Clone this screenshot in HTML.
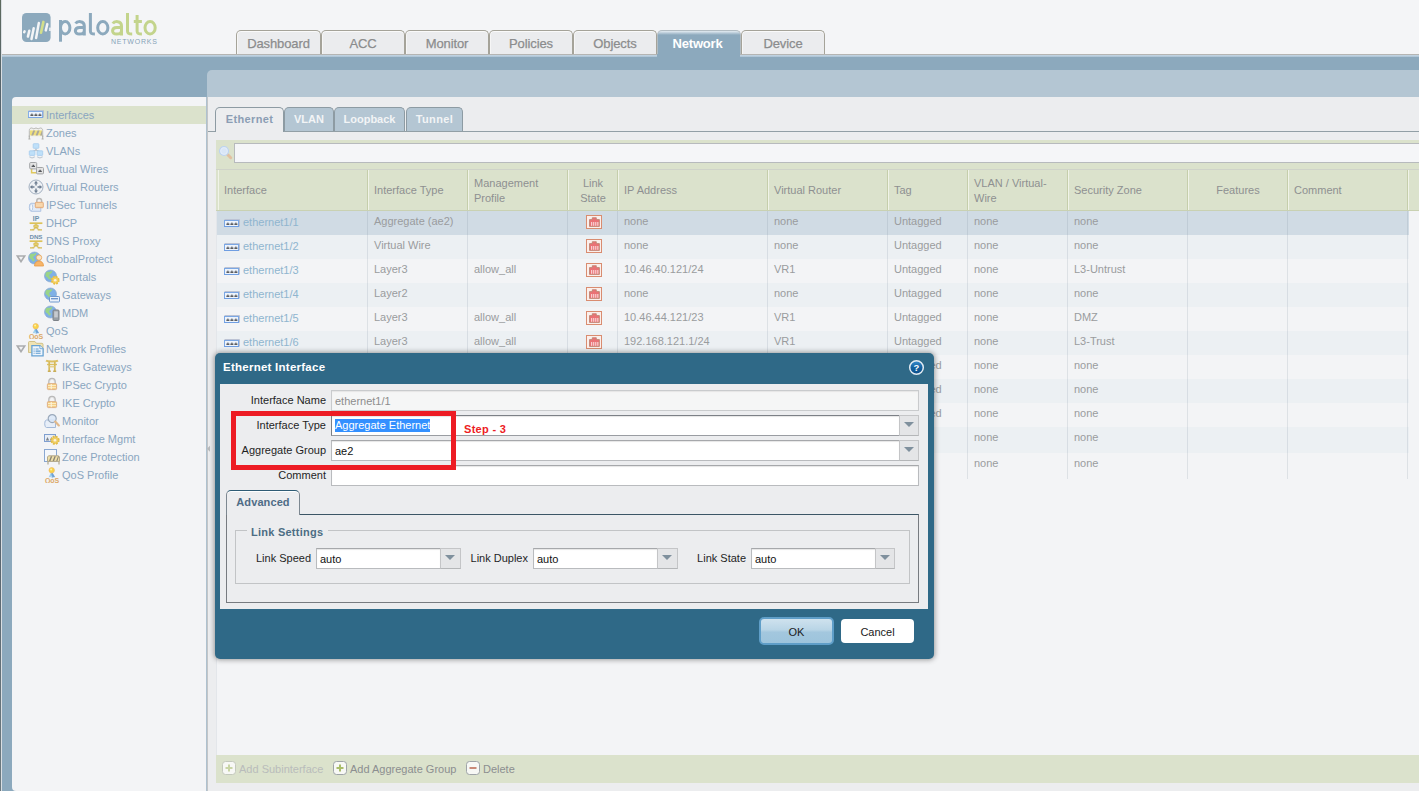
<!DOCTYPE html>
<html>
<head>
<meta charset="utf-8">
<title>Ethernet Interface</title>
<style>
*{box-sizing:border-box;margin:0;padding:0}
html,body{width:1419px;height:791px;overflow:hidden}
body{position:relative;background:#ecedef;font-family:"Liberation Sans",sans-serif;font-size:11px;color:#8f9194}
.abs{position:absolute}
/* header */
#hdr{left:0;top:0;width:1419px;height:54px;background:#f4f5f7}
#hline{left:0;top:54px;width:1419px;height:1px;background:#b5b5b3}
#hline2{left:0;top:55px;width:1419px;height:2px;background:linear-gradient(#c6d8e6,#a9c1d3)}
#band{left:0;top:57px;width:1419px;height:20px;background:#8ca9bd}
#leftcol{left:0;top:57px;width:207px;height:734px;background:#8ca9bd}
#ledge{left:0;top:0;width:1px;height:791px;background:linear-gradient(#5d6a5e 0,#56646e 12%,#48586a 40%,#5a6670 70%,#6c7a80 100%)}
#ledge2{left:1px;top:0;width:1px;height:791px;background:#d9dee2}
#subband{left:207px;top:70px;width:1212px;height:27px;background:#b4c6d3;border-top-left-radius:5px}
#content{left:207px;top:97px;width:1212px;height:694px;background:#ecedef}
#side{left:12px;top:97px;width:194px;height:694px;background:#f3f4f6;border-radius:4px 0 0 4px}
#sline1{left:206px;top:97px;width:1px;height:694px;background:#aec1cf}
#sline2{left:207px;top:97px;width:1px;height:694px;background:#c3c5c7}
/* nav tabs */
.nt{position:absolute;top:30px;height:24px;width:84px;border:1px solid #a5a399;border-bottom:none;border-radius:5px 5px 0 0;background:#ebecee;box-shadow:inset 0 1px 0 #fafafa,inset 1px 0 0 #f6f6f6;font-size:13px;color:#8b8c8d;text-align:center;line-height:26px;letter-spacing:-0.1px;-webkit-text-stroke:0.25px #8b8c8d}
.nt.on{background:linear-gradient(#e4ecf2 0,#8ca9bd 4px);color:#fff;font-weight:bold;border-color:#b3bdc3;box-shadow:none;-webkit-text-stroke:0;letter-spacing:-0.2px;padding-right:3px}
#ntfill{left:657px;top:54px;width:83px;height:4px;background:#8ca9bd}
/* sidebar tree */
.ti{position:absolute;left:0;width:194px;height:18px;line-height:18px;color:#8aa6c0;font-size:11px;white-space:nowrap}
.ti span{position:absolute;top:0}
.ti svg{position:absolute;top:1px}
.ti.sel{background:#dbe2cc}
/* inner tabs */
.st{position:absolute;top:107px;height:24px;border:1px solid #8d9ba3;border-bottom:none;border-radius:5px 5px 0 0;background:#b4c6d3;color:#f2f4f6;font-weight:bold;font-size:11px;text-align:center;line-height:23px}
.st.on{background:#ecedef;color:#8b9db4;height:25px;border-color:#8d9ba3}
#stline{left:208px;top:131px;width:1211px;height:1px;background:#929fa6}
/* grid */
#gridbg{left:216px;top:140px;width:1203px;height:643px;background:#f3f4f6}
#gleft{left:216px;top:211px;width:1px;height:544px;background:#e3e6ea}
#tb{left:216px;top:140px;width:1203px;height:29px;background:#dbe2cc}
#search{left:234px;top:143px;width:1190px;height:20px;background:#f5f6f8;border:1px solid #b7babd}
#gh{left:216px;top:169px;width:1203px;height:42px;background:#dbe2cc;border-top:1px solid #cfd3c9;border-bottom:1px solid #c9d1b2}
.hc{position:absolute;top:170px;height:40px;border-left:1px solid #f0f3e8;border-right:1px solid #c5ceab;color:#8e9091;font-size:11px;line-height:15px;padding-left:5px;display:flex;align-items:center}
.hc.c{justify-content:center;text-align:center;padding-left:0}
.row{position:absolute;left:217px;width:1192px;height:24px}
.row.a{background:#ecf0f3}
.row.s{background:#d0dbe4}
.cell{position:absolute;top:0;height:24px;line-height:21px;white-space:nowrap;color:#9a9c9e;font-size:11px;padding-left:6px}
.cell.lnk{color:#8fb5cf}
.vs{position:absolute;top:211px;width:1px;height:268px;background:rgba(110,130,150,.17)}
#bb{left:216px;top:755px;width:1203px;height:28px;background:#dbe2cc}
.bbt{position:absolute;top:755px;height:28px;line-height:28px;font-size:11px;color:#8c8e90;white-space:nowrap}
/* dialog */
#dlg{left:215px;top:353px;width:719px;height:306px;background:#2f6987;border-radius:5px;box-shadow:0 0 5px 1px rgba(60,60,60,.48)}
#dbody{left:220px;top:384px;width:708px;height:225px;background:#ecedef}
.lbl{position:absolute;color:#1f1f1f;font-size:11px;white-space:nowrap;text-align:right;height:20px;line-height:20px}
.inp{position:absolute;height:21px;background:#fff;border:1px solid #b9bbbe;border-top-color:#a6a8ab;font-size:11px;color:#111;line-height:18px;padding-left:3px;padding-top:1px;white-space:nowrap;box-shadow:inset 0 1px 1px #e6e6e6}
.trg{position:absolute;width:20px;height:21px;background:#e4e5e7;border:1px solid #c4c5c7;border-bottom-color:#b4b6b8}
.trg:after{content:"";position:absolute;left:4px;top:6px;border:5px solid transparent;border-top:5.500px solid #7f909d;border-bottom:none;width:0;height:0}
</style>
</head>
<body>
<div id="hdr" class="abs"></div>
<div id="hline" class="abs"></div>
<div id="hline2" class="abs"></div>
<div id="leftcol" class="abs"></div>
<div id="band" class="abs"></div>
<div id="subband" class="abs"></div>
<div id="content" class="abs"></div>
<div id="side" class="abs">
<div class="ti sel" style="top:9px"><svg style="left:16px" width="16" height="16" viewBox="0 0 16 16"><g transform="translate(0,3)"><path d="M1 0h14.800L15 1H0z" fill="#bcc3d4"/><path d="M15 1l.8-1v7L15 8z" fill="#aeb6c8"/><rect x="0.500" y="1.500" width="14" height="6" fill="#eef4fc" stroke="#86aee6"/><rect x="0" y="7" width="15" height="1" fill="#7aa5e4"/><path d="M2.400 6V4.400h1V3.400h1v1h1V6zM6.400 6V4.400h1V3.400h1v1h1V6zM10.400 6V4.400h1V3.400h1v1h1V6z" fill="#5b5d60"/></g></svg><span style="left:34px">Interfaces</span></div>
<div class="ti" style="top:27px"><svg style="left:16px" width="16" height="16" viewBox="0 0 16 16"><path d="M1.300 12V5.600c0-2 1.300-2.600 2.300-2.600s1.300.8 2.200.8S7 3 8 3s1.300.8 2.200.8S11.400 3 12.400 3s2.300.6 2.300 2.600V12" fill="#f1f1ee" stroke="#b8b8b4" stroke-width="1"/><rect x="2" y="5.400" width="12" height="5" fill="#efdf7c"/><path d="M3.200 10.400l2-5h2l-2 5zM7.600 10.400l2-5h2l-2 5zM12 10.400l2-5v5z" fill="#aaa79c"/><path d="M1.300 10.600v3.400M14.700 10.600v3.400M.4 14h2M13.600 14h2" stroke="#b0b0ac" stroke-width="1.100"/></svg><span style="left:34px">Zones</span></div>
<div class="ti" style="top:45px"><svg style="left:16px" width="16" height="16" viewBox="0 0 16 16"><path d="M8 5.500v2M4.200 8.500l3.800-1.500 3.800 1.500" stroke="#a9b4c0" fill="none" stroke-width=".9"/><rect x="5.200" y="0.700" width="5.600" height="4.600" rx=".6" fill="#bfe0f9" stroke="#a4cbee" stroke-width=".8"/><rect x="1.300" y="7.800" width="5.600" height="4.600" rx=".6" fill="#bfe0f9" stroke="#a4cbee" stroke-width=".8"/><rect x="9.100" y="7.800" width="5.600" height="4.600" rx=".6" fill="#bfe0f9" stroke="#a4cbee" stroke-width=".8"/><path d="M1.400 13.600c1.600 1.600 3.800 1.600 5.400 0M9.200 13.600c1.600 1.600 3.800 1.600 5.400 0" stroke="#c3cbd4" stroke-width="1.300" fill="none"/></svg><span style="left:34px">VLANs</span></div>
<div class="ti" style="top:63px"><svg style="left:16px" width="16" height="16" viewBox="0 0 16 16"><path d="M3.600 8v3.800h5" stroke="#e0c85e" stroke-width="1.500" fill="none"/><rect x="1.700" y="1.500" width="7" height="6.400" rx="1" fill="#e4e4e4" stroke="#a2a4a6"/><path d="M3.600 6h3.400V4.800H6V3.800H4.600v1h-1z" fill="#55585c"/><rect x="8.500" y="6.500" width="7" height="6.400" rx="1" fill="#e4e4e4" stroke="#a2a4a6"/><path d="M10.400 11h3.400V9.800h-1V8.800h-1.400v1h-1z" fill="#55585c"/></svg><span style="left:34px">Virtual Wires</span></div>
<div class="ti" style="top:81px"><svg style="left:16px" width="16" height="16" viewBox="0 0 16 16"><circle cx="8" cy="8" r="7" fill="#eef1f5" stroke="#a4b1c1"/><path d="M8 1.8l2 2.6H8.7v2.1H7.3V4.4H6zM8 14.2l-2-2.6h1.3V9.5h1.4v2.1H10zM1.8 8l2.6-2v1.3h2.1v1.4H4.4V10zM14.2 8l-2.6 2V8.7H9.5V7.3h2.1V6z" fill="#6f7f93"/></svg><span style="left:34px">Virtual Routers</span></div>
<div class="ti" style="top:99px"><svg style="left:16px" width="16" height="16" viewBox="0 0 16 16"><path d="M3.200 6.300h9.600v8H3.200a1.900 4 0 0 1 0-8z" fill="#e1ebf8" stroke="#a9c0e0" stroke-width=".9"/><ellipse cx="3.200" cy="10.300" rx="1.500" ry="3.500" fill="#f4f8fc" stroke="#a9c0e0" stroke-width=".8"/><path d="M8.800 5.600V3.800a2.400 2.400 0 0 1 4.800 0v1.800" fill="none" stroke="#b8b8b8" stroke-width="1.500"/><rect x="7.300" y="5.300" width="8" height="5.400" rx=".8" fill="#f4c894" stroke="#e2a878" stroke-width=".9"/><path d="M7.900 7h6.800M7.900 8.900h6.800" stroke="#fbe6c8" stroke-width=".9"/></svg><span style="left:34px">IPSec Tunnels</span></div>
<div class="ti" style="top:117px"><svg style="left:16px" width="16" height="16" viewBox="0 0 16 16"><text x="8" y="6" font-family="Liberation Sans" font-size="6.8" text-anchor="middle" fill="#6f90ab" font-weight="bold" letter-spacing="0">IP</text><path d="M1.600 8.200h12.800" stroke="#dcc258" stroke-width="1.700"/><path d="M8 9v1.400M2 14.800h4.200M9.800 14.800H14M4.600 14.600c2.600-.4 2.800-1.600 3-2.400M11.400 14.600c-2.600-.4-2.800-1.600-3-2.400" stroke="#d6bb52" stroke-width="1.300" fill="none"/><rect x="5.800" y="10" width="4.400" height="2.600" rx=".5" fill="#e6cf6c" stroke="#d0b54c" stroke-width=".7"/></svg><span style="left:34px">DHCP</span></div>
<div class="ti" style="top:135px"><svg style="left:16px" width="16" height="16" viewBox="0 0 16 16"><text x="8" y="6" font-family="Liberation Sans" font-size="6.2" text-anchor="middle" fill="#6f90ab" font-weight="bold" letter-spacing="-0.1">DNS</text><path d="M1.600 8.200h12.800" stroke="#dcc258" stroke-width="1.700"/><path d="M8 9v1.400M2 14.800h4.200M9.800 14.800H14M4.600 14.600c2.600-.4 2.800-1.600 3-2.400M11.400 14.600c-2.600-.4-2.800-1.600-3-2.400" stroke="#d6bb52" stroke-width="1.300" fill="none"/><rect x="5.800" y="10" width="4.400" height="2.600" rx=".5" fill="#e6cf6c" stroke="#d0b54c" stroke-width=".7"/></svg><span style="left:34px">DNS Proxy</span></div>
<div class="ti" style="top:153px"><svg style="left:4px;top:5px" width="10" height="8" viewBox="0 0 10 8"><path d="M1.300 1h7.400L5 6.600z" fill="#f1f2f4" stroke="#aaacae" stroke-width="1.700" stroke-linejoin="miter"/></svg><svg style="left:16px" width="16" height="16" viewBox="0 0 16 16"><circle cx="6.500" cy="7" r="6" fill="#7fb0e6" stroke="#8aa9d0" stroke-width=".7"/><path d="M2.600 3c1.400-.8 2.400 0 3.400-.2s1.200-1.200 2-1c.6 1 0 2-1 2.600S5.600 5.400 5.200 6.400s1.400 1.400 1.600 2.400-.8 1.800-1.600 1.600-.8-1.400-1.800-2S1.400 7.400 1.400 6 1.800 3.600 2.600 3z" fill="#9ad488"/><circle cx="11" cy="6.600" r="2.700" fill="#fbe3c4" stroke="#e8a85e" stroke-width=".9"/><path d="M6.500 15c0-3.400 2-4.900 4.500-4.900s4.500 1.500 4.500 4.900z" fill="#f6b56a" stroke="#e89a44" stroke-width=".8"/></svg><span style="left:34px">GlobalProtect</span></div>
<div class="ti" style="top:171px"><svg style="left:32px" width="16" height="16" viewBox="0 0 16 16"><circle cx="6.500" cy="7" r="6" fill="#7fb0e6" stroke="#8aa9d0" stroke-width=".7"/><path d="M2.600 3c1.400-.8 2.400 0 3.400-.2s1.200-1.200 2-1c.6 1 0 2-1 2.600S5.600 5.400 5.200 6.400s1.400 1.400 1.600 2.400-.8 1.800-1.600 1.600-.8-1.400-1.800-2S1.400 7.400 1.400 6 1.800 3.600 2.600 3z" fill="#9ad488"/><circle cx="11.200" cy="11.200" r="3.600" fill="#f3d060" stroke="#e8bd40" stroke-width="1.700" stroke-dasharray="1.700 1.150"/><circle cx="11.200" cy="11.200" r="1.300" fill="#fdf1dc"/></svg><span style="left:50px">Portals</span></div>
<div class="ti" style="top:189px"><svg style="left:32px" width="16" height="16" viewBox="0 0 16 16"><circle cx="6.500" cy="7" r="6" fill="#7fb0e6" stroke="#8aa9d0" stroke-width=".7"/><path d="M2.600 3c1.400-.8 2.400 0 3.400-.2s1.200-1.200 2-1c.6 1 0 2-1 2.600S5.600 5.400 5.200 6.400s1.400 1.400 1.600 2.400-.8 1.800-1.600 1.600-.8-1.400-1.800-2S1.400 7.400 1.400 6 1.800 3.600 2.600 3z" fill="#9ad488"/><rect x="5.500" y="9.500" width="10" height="5.500" rx=".8" fill="#eaf1fa" stroke="#6f97cc"/><rect x="7" y="11" width="7" height="1.400" fill="#6f97cc"/></svg><span style="left:50px">Gateways</span></div>
<div class="ti" style="top:207px"><svg style="left:32px" width="16" height="16" viewBox="0 0 16 16"><circle cx="6.500" cy="7" r="6" fill="#7fb0e6" stroke="#8aa9d0" stroke-width=".7"/><path d="M2.600 3c1.400-.8 2.400 0 3.400-.2s1.200-1.200 2-1c.6 1 0 2-1 2.600S5.600 5.400 5.200 6.400s1.400 1.400 1.600 2.400-.8 1.800-1.600 1.600-.8-1.400-1.800-2S1.400 7.400 1.400 6 1.800 3.600 2.600 3z" fill="#9ad488"/><rect x="9" y="5" width="6" height="10.500" rx="1" fill="#9aa0a6" stroke="#7c8288"/><rect x="10.200" y="6.400" width="3.600" height="6" fill="#c6cacf"/></svg><span style="left:50px">MDM</span></div>
<div class="ti" style="top:225px"><svg style="left:16px" width="16" height="16" viewBox="0 0 16 16"><path d="M6.800 5.800L4.600 10.400l1.800-.6.900 1.400 1.300-4.600z" fill="#9fd0ee"/><path d="M8.600 5.800l2.600 4.400-1.700-.2-.7 1.500-1.700-4.900z" fill="#6fa3d8"/><circle cx="7.700" cy="3.300" r="2.700" fill="#f9d548" stroke="#f0b860" stroke-width=".7"/><circle cx="7.100" cy="2.600" r="1" fill="#fdf0a8"/><text x="8" y="15.900" font-family="Liberation Sans" font-weight="bold" font-size="7" text-anchor="middle" fill="#dca866" letter-spacing="-0.100">QoS</text></svg><span style="left:34px">QoS</span></div>
<div class="ti" style="top:243px"><svg style="left:4px;top:5px" width="10" height="8" viewBox="0 0 10 8"><path d="M1.300 1h7.400L5 6.600z" fill="#f1f2f4" stroke="#aaacae" stroke-width="1.700" stroke-linejoin="miter"/></svg><svg style="left:16px" width="16" height="16" viewBox="0 0 16 16"><path d="M.5 11.500V1.500c0-.6.400-1 1-1h5.400l1.600 1.800h5.500c.6 0 1 .4 1 1v8.200z" fill="#efe3b4" stroke="#cdbc80" stroke-width=".9"/><path d="M3.900 4.700h8l3.200 3v7.100H3.900z" fill="#eef5fc" stroke="#67a2d4" stroke-width="1.300"/><path d="M11.900 4.700v3h3.200" fill="#fff" stroke="#67a2d4" stroke-width=".9"/><path d="M5.600 8h1M5.600 10.100h1M5.600 12.200h1M7.600 8h3M7.600 10.100h5M7.600 12.200h5" stroke="#5c9bd0" stroke-width="1.100"/></svg><span style="left:34px">Network Profiles</span></div>
<div class="ti" style="top:261px"><svg style="left:32px" width="16" height="16" viewBox="0 0 16 16"><path d="M2 1.600c2 1.200 10 1.200 12 0" stroke="#dcc064" stroke-width="1.900" fill="none"/><path d="M3 5.500h10" stroke="#dcc064" stroke-width="1.400"/><path d="M5.200 2.600v9.600M10.800 2.600v9.600" stroke="#d8ba5a" stroke-width="1.700"/><path d="M5.200 7.800h5.600" stroke="#e2ca7a" stroke-width="1.200"/><path d="M3.800 12.200h3M9.200 12.200h3" stroke="#c9ad58" stroke-width="1.500"/></svg><span style="left:50px">IKE Gateways</span></div>
<div class="ti" style="top:279px"><svg style="left:32px" width="16" height="16" viewBox="0 0 16 16"><path d="M5 7V4.800a3 3.300 0 0 1 6 0V7" fill="none" stroke="#b9b9b9" stroke-width="1.700"/><path d="M5.600 7V4.900a2.400 2.600 0 0 1 4.800 0V7" fill="none" stroke="#e4e4e4" stroke-width=".7"/><rect x="3.400" y="6.600" width="9.200" height="6" rx="1" fill="#f5cf82" stroke="#dcab84" stroke-width=".9"/><path d="M4 8.500h8M4 10.600h8" stroke="#fcebc4" stroke-width="1"/><path d="M7.300 7v5.300" stroke="#fdf3dc" stroke-width="1.400" opacity=".8"/></svg><span style="left:50px">IPSec Crypto</span></div>
<div class="ti" style="top:297px"><svg style="left:32px" width="16" height="16" viewBox="0 0 16 16"><path d="M5 7V4.800a3 3.300 0 0 1 6 0V7" fill="none" stroke="#b9b9b9" stroke-width="1.700"/><path d="M5.600 7V4.900a2.400 2.600 0 0 1 4.800 0V7" fill="none" stroke="#e4e4e4" stroke-width=".7"/><rect x="3.400" y="6.600" width="9.200" height="6" rx="1" fill="#f5cf82" stroke="#dcab84" stroke-width=".9"/><path d="M4 8.500h8M4 10.600h8" stroke="#fcebc4" stroke-width="1"/><path d="M7.300 7v5.300" stroke="#fdf3dc" stroke-width="1.400" opacity=".8"/></svg><span style="left:50px">IKE Crypto</span></div>
<div class="ti" style="top:315px"><svg style="left:32px" width="16" height="16" viewBox="0 0 16 16"><path d="M2.500 7h9v7.500h-9a1.800 3.750 0 0 1 0-7.500z" fill="#e7eef8" stroke="#a3b9d8"/><circle cx="8.200" cy="5.600" r="4" fill="#dbe8f8" fill-opacity=".85" stroke="#9aa9bb" stroke-width="1.200"/><path d="M11.200 8.600l3.600 3.800" stroke="#e2b98a" stroke-width="2.200" stroke-linecap="round"/></svg><span style="left:50px">Monitor</span></div>
<div class="ti" style="top:333px"><svg style="left:32px" width="16" height="16" viewBox="0 0 16 16"><rect x="0.500" y="3.500" width="11" height="7" fill="#e9eef6" stroke="#7f9fd0"/><path d="M1.800 9.400h3.400L3.500 6zM5.800 9.400h3.400L7.500 6z" fill="#7b8289"/><circle cx="11" cy="9.200" r="3.700" fill="#efd068" stroke="#e2bb48" stroke-width="1.900" stroke-dasharray="1.800 1.150"/><circle cx="11" cy="9.200" r="1.300" fill="#fdf1dc"/></svg><span style="left:50px">Interface Mgmt</span></div>
<div class="ti" style="top:351px"><svg style="left:32px" width="16" height="16" viewBox="0 0 16 16"><rect x="0.500" y="0.500" width="12" height="12" fill="#f4f7fb" stroke="#8aa8d2"/><path d="M3.500 8l1-1.200h10l1 1.200v4.400h-12z" fill="#efe0a8" stroke="#b4a98a"/><path d="M5 12l1.800-4.800h1.500L6.500 12zM8.600 12l1.800-4.800h1.500L10.100 12zM12.200 12l1.800-4.800h1l-1.600 4.800z" fill="#8c8678"/><path d="M4 12.600v3M15 12.600v3" stroke="#a9a08a" stroke-width="1.100"/></svg><span style="left:50px">Zone Protection</span></div>
<div class="ti" style="top:369px"><svg style="left:32px" width="16" height="16" viewBox="0 0 16 16"><path d="M6.800 5.800L4.600 10.400l1.800-.6.900 1.400 1.300-4.600z" fill="#9fd0ee"/><path d="M8.600 5.800l2.600 4.400-1.700-.2-.7 1.500-1.700-4.900z" fill="#6fa3d8"/><circle cx="7.700" cy="3.300" r="2.700" fill="#f9d548" stroke="#f0b860" stroke-width=".7"/><circle cx="7.100" cy="2.600" r="1" fill="#fdf0a8"/><text x="8" y="15.900" font-family="Liberation Sans" font-weight="bold" font-size="7" text-anchor="middle" fill="#dca866" letter-spacing="-0.100">QoS</text></svg><span style="left:50px">QoS Profile</span></div>
</div>
<div id="sline1" class="abs"></div>
<div id="sline2" class="abs"></div>
<div id="ledge" class="abs"></div>
<div id="ledge2" class="abs"></div>
<svg class="abs" style="left:20px;top:11px" width="34" height="34" viewBox="20 11 34 34">
<rect x="22" y="13" width="28.6" height="29" rx="4.5" ry="4.5" fill="#8ca9bd"/>
<g stroke="#f4f5f7" stroke-width="2.5" stroke-linecap="round" fill="none">
<path d="M24.2 32.2L24.6 31.4"/>
<path d="M27.9 36.6L29.3 30.7"/>
<path d="M31.5 39L33.7 28.2"/>
<path d="M36.1 38L38.8 23.1"/>
<path d="M45.8 30.4L47.3 24.1"/>
<path d="M41 32.7L43.4 21.9" stroke="#d3df8b" stroke-width="2.6"/>
</g>
<rect x="49.2" y="27.6" width="1.6" height="3.4" fill="#f4f5f7"/>
</svg>
<svg class="abs" style="left:56px;top:10px" width="104" height="34" viewBox="56 10 104 34" fill="none" stroke-width="3" stroke-linejoin="round">
<g stroke="#8ca9bd"><path d="M60.500 20V41.700"/><ellipse cx="65.200" cy="27.750" rx="4.700" ry="6.250"/><path d="M75.6 23.5C77.0 21.2 84.3 20 84.3 26V35.5M84.3 27.6H79.6C74.0 27.6 74.0 34.1 79.3 34.1C82.0 34.1 84.3 33 84.3 30.4"/><path d="M90.400 13V31C90.400 33.500 91.800 34.100 94.900 34.100"/><ellipse cx="102.800" cy="27.750" rx="5.100" ry="6.250"/></g>
<g stroke="#c3d48c"><path d="M112.8 23.5C114.2 21.2 121.5 20 121.5 26V35.5M121.5 27.6H116.8C111.2 27.6 111.2 34.1 116.5 34.1C119.2 34.1 121.5 33 121.5 30.4"/><path d="M127.500 13V31C127.500 33.500 128.900 34.100 132.200 34.100"/><path d="M137.100 15V31C137.100 33.500 138.500 34.100 141.900 34.100M133.800 21.500H141.900"/><ellipse cx="150.100" cy="27.750" rx="5.100" ry="6.250"/></g>
</svg>
<div class="abs" style="left:111px;top:37.5px;font-size:7px;line-height:8px;color:#86a3b8;white-space:nowrap;letter-spacing:0.78px">NETWORKS</div>

<div class="nt" style="left:236px;width:85px">Dashboard</div>
<div class="nt" style="left:321px;width:84px">ACC</div>
<div class="nt" style="left:405px;width:84px">Monitor</div>
<div class="nt" style="left:489px;width:84px">Policies</div>
<div class="nt" style="left:573px;width:84px">Objects</div>
<div class="nt on" style="left:657px;width:84px">Network</div>
<div class="nt" style="left:741px;width:84px">Device</div>

<div id="ntfill" class="abs"></div>
<svg class="abs" style="left:206px;top:445px" width="5" height="8" viewBox="0 0 5 8"><path d="M4 .8v6L.8 3.800z" fill="#b9bbbd"/></svg>
<!--SUBTABS_S-->
<div id="stline" class="abs"></div>
<div class="st on" style="left:215px;width:69px;letter-spacing:.35px">Ethernet</div>
<div class="st" style="left:284px;width:50px">VLAN</div>
<div class="st" style="left:334px;width:71px">Loopback</div>
<div class="st" style="left:406px;width:57px;letter-spacing:.4px">Tunnel</div>
<!--SUBTABS_E-->
<!--GRID_S-->
<div id="gridbg" class="abs"></div>
<div id="gleft" class="abs"></div>
<div id="tb" class="abs"></div>
<svg class="abs" style="left:218px;top:145px" width="16" height="16" viewBox="0 0 16 16"><path d="M9.800 9.800l2.900 2.900" stroke="#e2c0a0" stroke-width="3" stroke-linecap="round"/><circle cx="6" cy="6" r="4.500" fill="#d9e6f6" stroke="#bdd3f0" stroke-width="1.200"/><circle cx="6" cy="6" r="3.300" fill="none" stroke="#e6effa" stroke-width=".7"/></svg>
<div id="search" class="abs"></div>
<div id="gh" class="abs"></div>
<div class="hc" style="left:218px;width:150px">Interface</div>
<div class="hc" style="left:368px;width:100px">Interface Type</div>
<div class="hc" style="left:468px;width:100px;padding-top:2px">Management<br>Profile</div>
<div class="hc c" style="left:568px;width:50px;padding-top:2px">Link<br>State</div>
<div class="hc" style="left:618px;width:150px">IP Address</div>
<div class="hc" style="left:768px;width:120px">Virtual Router</div>
<div class="hc" style="left:888px;width:80px">Tag</div>
<div class="hc" style="left:968px;width:100px;padding-top:2px">VLAN / Virtual-<br>Wire</div>
<div class="hc" style="left:1068px;width:120px">Security Zone</div>
<div class="hc c" style="left:1188px;width:100px">Features</div>
<div class="hc" style="left:1288px;width:120px">Comment</div>
<div class="hc" style="left:1408px;width:12px"></div>
<div class="row s" style="top:211px;height:24px"><svg style="position:absolute;left:7px;top:8px" width="16" height="9" viewBox="0 0 16 9"><path d="M1 0h14.800L15 1H0z" fill="#bcc3d4"/><path d="M15 1l.8-1v7L15 8z" fill="#aeb6c8"/><rect x="0.500" y="1.500" width="14" height="6" fill="#eef4fc" stroke="#7ba7e4"/><rect x="0" y="7" width="15" height="1" fill="#6f9ee2"/><path d="M2.400 6V4.400h1V3.400h1v1h1V6zM6.400 6V4.400h1V3.400h1v1h1V6zM10.400 6V4.400h1V3.400h1v1h1V6z" fill="#5b5d60"/></svg><div class="cell lnk" style="left:20px;top:1px">ethernet1/1</div><div class="cell" style="left:151px">Aggregate (ae2)</div><div class="cell" style="left:401px">none</div><div class="cell" style="left:551px">none</div><div class="cell" style="left:671px">Untagged</div><div class="cell" style="left:751px">none</div><div class="cell" style="left:851px">none</div><div style="position:absolute;left:351px;top:0;width:50px;height:24px"><svg style="position:absolute;left:18px;top:4px" width="16" height="14" viewBox="0 0 16 14"><rect x="0.500" y="0.500" width="15" height="13" fill="#fbefeb" stroke="#d98c70"/><path d="M3.500 11.400V4.600h2.800V2.700h4V4.600h3.100v6.800z" fill="#ea7276" stroke="#b9826e" stroke-width=".8"/><path d="M5.700 7v3.800M7.750 7v3.800M9.800 7v3.800M11.850 7v3.800" stroke="#fdf0f0" stroke-width=".9"/></svg></div></div>
<div class="row a" style="top:235px;height:24px"><svg style="position:absolute;left:7px;top:8px" width="16" height="9" viewBox="0 0 16 9"><path d="M1 0h14.800L15 1H0z" fill="#bcc3d4"/><path d="M15 1l.8-1v7L15 8z" fill="#aeb6c8"/><rect x="0.500" y="1.500" width="14" height="6" fill="#eef4fc" stroke="#7ba7e4"/><rect x="0" y="7" width="15" height="1" fill="#6f9ee2"/><path d="M2.400 6V4.400h1V3.400h1v1h1V6zM6.400 6V4.400h1V3.400h1v1h1V6zM10.400 6V4.400h1V3.400h1v1h1V6z" fill="#5b5d60"/></svg><div class="cell lnk" style="left:20px;top:1px">ethernet1/2</div><div class="cell" style="left:151px">Virtual Wire</div><div class="cell" style="left:401px">none</div><div class="cell" style="left:551px">none</div><div class="cell" style="left:671px">Untagged</div><div class="cell" style="left:751px">none</div><div class="cell" style="left:851px">none</div><div style="position:absolute;left:351px;top:0;width:50px;height:24px"><svg style="position:absolute;left:18px;top:4px" width="16" height="14" viewBox="0 0 16 14"><rect x="0.500" y="0.500" width="15" height="13" fill="#fbefeb" stroke="#d98c70"/><path d="M3.500 11.400V4.600h2.800V2.700h4V4.600h3.100v6.800z" fill="#ea7276" stroke="#b9826e" stroke-width=".8"/><path d="M5.700 7v3.800M7.750 7v3.800M9.800 7v3.800M11.850 7v3.800" stroke="#fdf0f0" stroke-width=".9"/></svg></div></div>
<div class="row " style="top:259px;height:24px"><svg style="position:absolute;left:7px;top:8px" width="16" height="9" viewBox="0 0 16 9"><path d="M1 0h14.800L15 1H0z" fill="#bcc3d4"/><path d="M15 1l.8-1v7L15 8z" fill="#aeb6c8"/><rect x="0.500" y="1.500" width="14" height="6" fill="#eef4fc" stroke="#7ba7e4"/><rect x="0" y="7" width="15" height="1" fill="#6f9ee2"/><path d="M2.400 6V4.400h1V3.400h1v1h1V6zM6.400 6V4.400h1V3.400h1v1h1V6zM10.400 6V4.400h1V3.400h1v1h1V6z" fill="#5b5d60"/></svg><div class="cell lnk" style="left:20px;top:1px">ethernet1/3</div><div class="cell" style="left:151px">Layer3</div><div class="cell" style="left:251px">allow_all</div><div class="cell" style="left:401px">10.46.40.121/24</div><div class="cell" style="left:551px">VR1</div><div class="cell" style="left:671px">Untagged</div><div class="cell" style="left:751px">none</div><div class="cell" style="left:851px">L3-Untrust</div><div style="position:absolute;left:351px;top:0;width:50px;height:24px"><svg style="position:absolute;left:18px;top:4px" width="16" height="14" viewBox="0 0 16 14"><rect x="0.500" y="0.500" width="15" height="13" fill="#fbefeb" stroke="#d98c70"/><path d="M3.500 11.400V4.600h2.800V2.700h4V4.600h3.100v6.800z" fill="#ea7276" stroke="#b9826e" stroke-width=".8"/><path d="M5.700 7v3.800M7.750 7v3.800M9.800 7v3.800M11.850 7v3.800" stroke="#fdf0f0" stroke-width=".9"/></svg></div></div>
<div class="row a" style="top:283px;height:24px"><svg style="position:absolute;left:7px;top:8px" width="16" height="9" viewBox="0 0 16 9"><path d="M1 0h14.800L15 1H0z" fill="#bcc3d4"/><path d="M15 1l.8-1v7L15 8z" fill="#aeb6c8"/><rect x="0.500" y="1.500" width="14" height="6" fill="#eef4fc" stroke="#7ba7e4"/><rect x="0" y="7" width="15" height="1" fill="#6f9ee2"/><path d="M2.400 6V4.400h1V3.400h1v1h1V6zM6.400 6V4.400h1V3.400h1v1h1V6zM10.400 6V4.400h1V3.400h1v1h1V6z" fill="#5b5d60"/></svg><div class="cell lnk" style="left:20px;top:1px">ethernet1/4</div><div class="cell" style="left:151px">Layer2</div><div class="cell" style="left:401px">none</div><div class="cell" style="left:551px">none</div><div class="cell" style="left:671px">Untagged</div><div class="cell" style="left:751px">none</div><div class="cell" style="left:851px">none</div><div style="position:absolute;left:351px;top:0;width:50px;height:24px"><svg style="position:absolute;left:18px;top:4px" width="16" height="14" viewBox="0 0 16 14"><rect x="0.500" y="0.500" width="15" height="13" fill="#fbefeb" stroke="#d98c70"/><path d="M3.500 11.400V4.600h2.800V2.700h4V4.600h3.100v6.800z" fill="#ea7276" stroke="#b9826e" stroke-width=".8"/><path d="M5.700 7v3.800M7.750 7v3.800M9.800 7v3.800M11.850 7v3.800" stroke="#fdf0f0" stroke-width=".9"/></svg></div></div>
<div class="row " style="top:307px;height:24px"><svg style="position:absolute;left:7px;top:8px" width="16" height="9" viewBox="0 0 16 9"><path d="M1 0h14.800L15 1H0z" fill="#bcc3d4"/><path d="M15 1l.8-1v7L15 8z" fill="#aeb6c8"/><rect x="0.500" y="1.500" width="14" height="6" fill="#eef4fc" stroke="#7ba7e4"/><rect x="0" y="7" width="15" height="1" fill="#6f9ee2"/><path d="M2.400 6V4.400h1V3.400h1v1h1V6zM6.400 6V4.400h1V3.400h1v1h1V6zM10.400 6V4.400h1V3.400h1v1h1V6z" fill="#5b5d60"/></svg><div class="cell lnk" style="left:20px;top:1px">ethernet1/5</div><div class="cell" style="left:151px">Layer3</div><div class="cell" style="left:251px">allow_all</div><div class="cell" style="left:401px">10.46.44.121/23</div><div class="cell" style="left:551px">VR1</div><div class="cell" style="left:671px">Untagged</div><div class="cell" style="left:751px">none</div><div class="cell" style="left:851px">DMZ</div><div style="position:absolute;left:351px;top:0;width:50px;height:24px"><svg style="position:absolute;left:18px;top:4px" width="16" height="14" viewBox="0 0 16 14"><rect x="0.500" y="0.500" width="15" height="13" fill="#fbefeb" stroke="#d98c70"/><path d="M3.500 11.400V4.600h2.800V2.700h4V4.600h3.100v6.800z" fill="#ea7276" stroke="#b9826e" stroke-width=".8"/><path d="M5.700 7v3.800M7.750 7v3.800M9.800 7v3.800M11.850 7v3.800" stroke="#fdf0f0" stroke-width=".9"/></svg></div></div>
<div class="row a" style="top:331px;height:24px"><svg style="position:absolute;left:7px;top:8px" width="16" height="9" viewBox="0 0 16 9"><path d="M1 0h14.800L15 1H0z" fill="#bcc3d4"/><path d="M15 1l.8-1v7L15 8z" fill="#aeb6c8"/><rect x="0.500" y="1.500" width="14" height="6" fill="#eef4fc" stroke="#7ba7e4"/><rect x="0" y="7" width="15" height="1" fill="#6f9ee2"/><path d="M2.400 6V4.400h1V3.400h1v1h1V6zM6.400 6V4.400h1V3.400h1v1h1V6zM10.400 6V4.400h1V3.400h1v1h1V6z" fill="#5b5d60"/></svg><div class="cell lnk" style="left:20px;top:1px">ethernet1/6</div><div class="cell" style="left:151px">Layer3</div><div class="cell" style="left:251px">allow_all</div><div class="cell" style="left:401px">192.168.121.1/24</div><div class="cell" style="left:551px">VR1</div><div class="cell" style="left:671px">Untagged</div><div class="cell" style="left:751px">none</div><div class="cell" style="left:851px">L3-Trust</div><div style="position:absolute;left:351px;top:0;width:50px;height:24px"><svg style="position:absolute;left:18px;top:4px" width="16" height="14" viewBox="0 0 16 14"><rect x="0.500" y="0.500" width="15" height="13" fill="#fbefeb" stroke="#d98c70"/><path d="M3.500 11.400V4.600h2.800V2.700h4V4.600h3.100v6.800z" fill="#ea7276" stroke="#b9826e" stroke-width=".8"/><path d="M5.700 7v3.800M7.750 7v3.800M9.800 7v3.800M11.850 7v3.800" stroke="#fdf0f0" stroke-width=".9"/></svg></div></div>
<div class="row " style="top:355px;height:24px"><svg style="position:absolute;left:7px;top:8px" width="16" height="9" viewBox="0 0 16 9"><path d="M1 0h14.800L15 1H0z" fill="#bcc3d4"/><path d="M15 1l.8-1v7L15 8z" fill="#aeb6c8"/><rect x="0.500" y="1.500" width="14" height="6" fill="#eef4fc" stroke="#7ba7e4"/><rect x="0" y="7" width="15" height="1" fill="#6f9ee2"/><path d="M2.400 6V4.400h1V3.400h1v1h1V6zM6.400 6V4.400h1V3.400h1v1h1V6zM10.400 6V4.400h1V3.400h1v1h1V6z" fill="#5b5d60"/></svg><div class="cell lnk" style="left:20px;top:1px">ethernet1/7</div><div class="cell" style="left:401px">none</div><div class="cell" style="left:551px">none</div><div class="cell" style="left:671px">Untagged</div><div class="cell" style="left:751px">none</div><div class="cell" style="left:851px">none</div><div style="position:absolute;left:351px;top:0;width:50px;height:24px"><svg style="position:absolute;left:18px;top:4px" width="16" height="14" viewBox="0 0 16 14"><rect x="0.500" y="0.500" width="15" height="13" fill="#fbefeb" stroke="#d98c70"/><path d="M3.500 11.400V4.600h2.800V2.700h4V4.600h3.100v6.800z" fill="#ea7276" stroke="#b9826e" stroke-width=".8"/><path d="M5.700 7v3.800M7.750 7v3.800M9.800 7v3.800M11.850 7v3.800" stroke="#fdf0f0" stroke-width=".9"/></svg></div></div>
<div class="row a" style="top:379px;height:24px"><svg style="position:absolute;left:7px;top:8px" width="16" height="9" viewBox="0 0 16 9"><path d="M1 0h14.800L15 1H0z" fill="#bcc3d4"/><path d="M15 1l.8-1v7L15 8z" fill="#aeb6c8"/><rect x="0.500" y="1.500" width="14" height="6" fill="#eef4fc" stroke="#7ba7e4"/><rect x="0" y="7" width="15" height="1" fill="#6f9ee2"/><path d="M2.400 6V4.400h1V3.400h1v1h1V6zM6.400 6V4.400h1V3.400h1v1h1V6zM10.400 6V4.400h1V3.400h1v1h1V6z" fill="#5b5d60"/></svg><div class="cell lnk" style="left:20px;top:1px">ethernet1/8</div><div class="cell" style="left:401px">none</div><div class="cell" style="left:551px">none</div><div class="cell" style="left:671px">Untagged</div><div class="cell" style="left:751px">none</div><div class="cell" style="left:851px">none</div><div style="position:absolute;left:351px;top:0;width:50px;height:24px"><svg style="position:absolute;left:18px;top:4px" width="16" height="14" viewBox="0 0 16 14"><rect x="0.500" y="0.500" width="15" height="13" fill="#fbefeb" stroke="#d98c70"/><path d="M3.500 11.400V4.600h2.800V2.700h4V4.600h3.100v6.800z" fill="#ea7276" stroke="#b9826e" stroke-width=".8"/><path d="M5.700 7v3.800M7.750 7v3.800M9.800 7v3.800M11.850 7v3.800" stroke="#fdf0f0" stroke-width=".9"/></svg></div></div>
<div class="row " style="top:403px;height:24px"><svg style="position:absolute;left:7px;top:8px" width="16" height="9" viewBox="0 0 16 9"><path d="M1 0h14.800L15 1H0z" fill="#bcc3d4"/><path d="M15 1l.8-1v7L15 8z" fill="#aeb6c8"/><rect x="0.500" y="1.500" width="14" height="6" fill="#eef4fc" stroke="#7ba7e4"/><rect x="0" y="7" width="15" height="1" fill="#6f9ee2"/><path d="M2.400 6V4.400h1V3.400h1v1h1V6zM6.400 6V4.400h1V3.400h1v1h1V6zM10.400 6V4.400h1V3.400h1v1h1V6z" fill="#5b5d60"/></svg><div class="cell lnk" style="left:20px;top:1px">ethernet1/9</div><div class="cell" style="left:401px">none</div><div class="cell" style="left:551px">none</div><div class="cell" style="left:671px">Untagged</div><div class="cell" style="left:751px">none</div><div class="cell" style="left:851px">none</div><div style="position:absolute;left:351px;top:0;width:50px;height:24px"><svg style="position:absolute;left:18px;top:4px" width="16" height="14" viewBox="0 0 16 14"><rect x="0.500" y="0.500" width="15" height="13" fill="#fbefeb" stroke="#d98c70"/><path d="M3.500 11.400V4.600h2.800V2.700h4V4.600h3.100v6.800z" fill="#ea7276" stroke="#b9826e" stroke-width=".8"/><path d="M5.700 7v3.800M7.750 7v3.800M9.800 7v3.800M11.850 7v3.800" stroke="#fdf0f0" stroke-width=".9"/></svg></div></div>
<div class="row a" style="top:427px;height:26px"><svg style="position:absolute;left:7px;top:8px" width="16" height="9" viewBox="0 0 16 9"><path d="M1 0h14.800L15 1H0z" fill="#bcc3d4"/><path d="M15 1l.8-1v7L15 8z" fill="#aeb6c8"/><rect x="0.500" y="1.500" width="14" height="6" fill="#eef4fc" stroke="#7ba7e4"/><rect x="0" y="7" width="15" height="1" fill="#6f9ee2"/><path d="M2.400 6V4.400h1V3.400h1v1h1V6zM6.400 6V4.400h1V3.400h1v1h1V6zM10.400 6V4.400h1V3.400h1v1h1V6z" fill="#5b5d60"/></svg><div class="cell lnk" style="left:20px;top:1px">ethernet1/10</div><div class="cell" style="left:401px">none</div><div class="cell" style="left:551px">none</div><div class="cell" style="left:751px">none</div><div class="cell" style="left:851px">none</div><div style="position:absolute;left:351px;top:0;width:50px;height:24px"><svg style="position:absolute;left:18px;top:4px" width="16" height="14" viewBox="0 0 16 14"><rect x="0.500" y="0.500" width="15" height="13" fill="#fbefeb" stroke="#d98c70"/><path d="M3.500 11.400V4.600h2.800V2.700h4V4.600h3.100v6.800z" fill="#ea7276" stroke="#b9826e" stroke-width=".8"/><path d="M5.700 7v3.800M7.750 7v3.800M9.800 7v3.800M11.850 7v3.800" stroke="#fdf0f0" stroke-width=".9"/></svg></div></div>
<div class="row " style="top:453px;height:26px"><svg style="position:absolute;left:7px;top:8px" width="16" height="9" viewBox="0 0 16 9"><path d="M1 0h14.800L15 1H0z" fill="#bcc3d4"/><path d="M15 1l.8-1v7L15 8z" fill="#aeb6c8"/><rect x="0.500" y="1.500" width="14" height="6" fill="#eef4fc" stroke="#7ba7e4"/><rect x="0" y="7" width="15" height="1" fill="#6f9ee2"/><path d="M2.400 6V4.400h1V3.400h1v1h1V6zM6.400 6V4.400h1V3.400h1v1h1V6zM10.400 6V4.400h1V3.400h1v1h1V6z" fill="#5b5d60"/></svg><div class="cell lnk" style="left:20px;top:1px">ethernet1/11</div><div class="cell" style="left:401px">none</div><div class="cell" style="left:551px">none</div><div class="cell" style="left:751px">none</div><div class="cell" style="left:851px">none</div><div style="position:absolute;left:351px;top:0;width:50px;height:24px"><svg style="position:absolute;left:18px;top:4px" width="16" height="14" viewBox="0 0 16 14"><rect x="0.500" y="0.500" width="15" height="13" fill="#fbefeb" stroke="#d98c70"/><path d="M3.500 11.400V4.600h2.800V2.700h4V4.600h3.100v6.800z" fill="#ea7276" stroke="#b9826e" stroke-width=".8"/><path d="M5.700 7v3.800M7.750 7v3.800M9.800 7v3.800M11.850 7v3.800" stroke="#fdf0f0" stroke-width=".9"/></svg></div></div>
<div class="vs" style="left:367px"></div>
<div class="vs" style="left:467px"></div>
<div class="vs" style="left:567px"></div>
<div class="vs" style="left:617px"></div>
<div class="vs" style="left:767px"></div>
<div class="vs" style="left:887px"></div>
<div class="vs" style="left:967px"></div>
<div class="vs" style="left:1067px"></div>
<div class="vs" style="left:1187px"></div>
<div class="vs" style="left:1287px"></div>
<div class="vs" style="left:1407px"></div>
<div id="bb" class="abs"></div>
<svg class="abs" style="left:222px;top:761px" width="15" height="15" viewBox="0 0 15 15"><rect x="0.500" y="0.500" width="13" height="13" rx="3" fill="#f7f8f5" stroke="#c4c9bd"/><path d="M3.500 7h7M7 3.500v7" stroke="#c9d5a6" stroke-width="2"/></svg>
<div class="bbt" style="left:239px;color:#b9bcbb">Add Subinterface</div>
<svg class="abs" style="left:333px;top:761px" width="15" height="15" viewBox="0 0 15 15"><rect x="0.500" y="0.500" width="13" height="13" rx="3" fill="#f7f8f5" stroke="#9fa4a8"/><path d="M3.500 7h7M7 3.500v7" stroke="#a9bd6a" stroke-width="2"/></svg>
<div class="bbt" style="left:350px">Add Aggregate Group</div>
<svg class="abs" style="left:466px;top:761px" width="15" height="15" viewBox="0 0 15 15"><rect x="0.500" y="0.500" width="13" height="13" rx="3" fill="#f7f8f5" stroke="#9fa4a8"/><path d="M3.500 7h7" stroke="#c98a78" stroke-width="2"/></svg>
<div class="bbt" style="left:483px">Delete</div>
<!--GRID_E-->
<!--DLG_S-->
<div id="dlg" class="abs"></div>
<div id="dbody" class="abs"></div>
<div class="abs" style="left:223px;top:359px;font-size:11.500px;font-weight:bold;color:#fff;line-height:16px;letter-spacing:.25px;white-space:nowrap">Ethernet Interface</div>
<svg class="abs" style="left:908px;top:359px" width="17" height="17" viewBox="0 0 17 17"><defs><linearGradient id="hg" x1="0" y1="0" x2="0" y2="1"><stop offset="0" stop-color="#3a8fd0"/><stop offset=".5" stop-color="#14619f"/><stop offset="1" stop-color="#0d4f8a"/></linearGradient></defs><circle cx="8.500" cy="8.500" r="6.800" fill="url(#hg)" stroke="#e3ebf2" stroke-width="1.500"/><text x="8.500" y="12" font-family="Liberation Sans" font-weight="bold" font-size="9.500" text-anchor="middle" fill="#fff">?</text></svg>
<div class="lbl" style="left:226px;width:100px;top:390px">Interface Name</div>
<div class="lbl" style="left:226px;width:100px;top:415px">Interface Type</div>
<div class="lbl" style="left:226px;width:100px;top:440px">Aggregate Group</div>
<div class="lbl" style="left:226px;width:100px;top:465px">Comment</div>
<div class="inp" style="left:331px;top:390px;width:588px;background:#f5f6f6;color:#8d8d8d;border-color:#c9cbcd">ethernet1/1</div>
<div class="inp" style="left:331px;top:415px;width:569px;border-color:#7c8086 #9a9da2 #9a9da2 #7c8086"><span style="background:#3390ff;color:#fff;display:inline-block;height:13px;line-height:13px;margin-top:2px;vertical-align:top">Aggregate Ethernet</span></div>
<div class="trg" style="left:899px;top:415px"></div>
<div class="inp" style="left:331px;top:440px;width:569px">ae2</div>
<div class="trg" style="left:899px;top:440px"></div>
<div class="inp" style="left:331px;top:465px;width:588px"></div>
<div class="abs" style="left:231px;top:411px;width:225px;height:59px;border:5px solid #ed1c24"></div>
<div class="abs" style="left:464px;top:422px;font-size:11px;font-weight:bold;color:#ed1c24;line-height:14px;letter-spacing:.3px;white-space:nowrap">Step - 3</div>
<div class="abs" style="left:226px;top:514px;width:693px;height:89px;border:1px solid #777b80;border-top-color:#3c5666"></div>
<div class="abs" style="left:226px;top:490px;width:74px;height:25px;border:1px solid #7d8891;border-top-color:#2f5c75;border-bottom:none;border-radius:5px 5px 0 0;background:#ecedef;box-shadow:inset 0 1px 0 #fff;color:#4f6c86;font-weight:bold;font-size:11px;line-height:23px;text-align:center;letter-spacing:.1px">Advanced</div>
<div class="abs" style="left:235px;top:530px;width:675px;height:54px;border:1px solid #c2c4c6"></div>
<div class="abs" style="left:247px;top:525px;width:81px;height:15px;background:#ecedef;color:#4d6d84;font-weight:bold;font-size:11px;line-height:15px;padding-left:4px;letter-spacing:.25px;white-space:nowrap">Link Settings</div>
<div class="lbl" style="left:240px;width:71px;top:548px">Link Speed</div>
<div class="inp" style="left:316px;top:548px;width:125px">auto</div>
<div class="trg" style="left:440px;top:548px;width:21px"></div>
<div class="lbl" style="left:457px;width:71px;top:548px">Link Duplex</div>
<div class="inp" style="left:533px;top:548px;width:125px">auto</div>
<div class="trg" style="left:657px;top:548px;width:21px"></div>
<div class="lbl" style="left:675px;width:71px;top:548px">Link State</div>
<div class="inp" style="left:751px;top:548px;width:125px">auto</div>
<div class="trg" style="left:875px;top:548px"></div>
<div class="abs" style="left:759px;top:617px;width:75px;height:28px;border-radius:5px;border:2px solid #5f9ec8;background:linear-gradient(#cfe2ee 0,#b9d5e6 45%,#a3c7de 55%,#9dc4dc 100%);color:#1a1a1a;font-size:11px;line-height:26px;text-align:center">OK</div>
<div class="abs" style="left:841px;top:619px;width:73px;height:24px;border-radius:4px;background:#fff;color:#1a1a1a;font-size:11px;line-height:26px;text-align:center">Cancel</div>
<!--DLG_E-->
</body>
</html>
